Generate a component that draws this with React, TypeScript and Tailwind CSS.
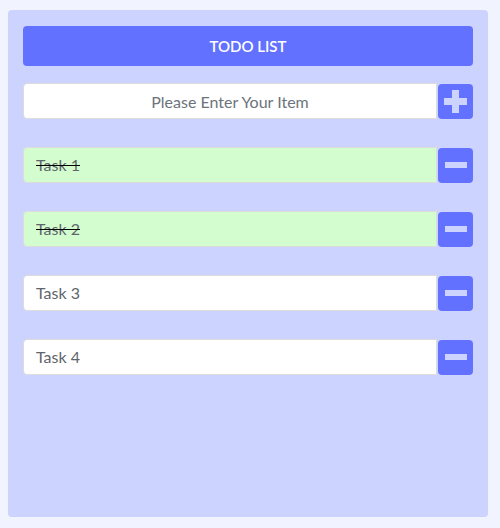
import { useState } from 'react';

type Task = { id: number; text: string; done: boolean };

const initial: Task[] = [
  { id: 1, text: 'Task 1', done: true },
  { id: 2, text: 'Task 2', done: true },
  { id: 3, text: 'Task 3', done: false },
  { id: 4, text: 'Task 4', done: false },
];

const App = () => {
  const [tasks, setTasks] = useState<Task[]>(initial);
  const [item, setItem] = useState('');

  const addTask = () => {
    if (!item.trim()) return;
    setTasks([...tasks, { id: Date.now(), text: item, done: false }]);
    setItem('');
  };

  const toggle = (id: number) => {
    setTasks(tasks.map((t) => (t.id === id ? { ...t, done: !t.done } : t)));
  };

  const remove = (id: number) => {
    setTasks(tasks.filter((t) => t.id !== id));
  };

  return (
    <div className="min-h-[528px] w-[500px] bg-[#f1f3fe] pt-[10px] pl-2 font-['Lato','Liberation_Sans',sans-serif]">
      <div className="h-[507px] w-[480px] rounded bg-[#ccd3ff] px-[15px] pt-4">
        <div className="flex h-10 items-center justify-center rounded bg-[#6271ff] text-[15px] font-semibold text-white">
          TODO LIST
        </div>

        <div className="mt-[17px] flex flex-col gap-7">
          <div className="flex h-9 items-center">
            <input
              className="h-9 flex-1 rounded-l border border-[#dcdcdc] bg-white px-3 text-center text-base text-gray-700 placeholder:text-[#6c737c] focus:outline-none"
              placeholder="Please Enter Your Item"
              value={item}
              onChange={(e) => setItem(e.target.value)}
            />
            <button
              type="button"
              onClick={addTask}
              className="ml-px flex h-[35px] w-[35px] items-center justify-center rounded bg-[#6271ff]"
            >
              <svg width="23" height="23" viewBox="0 0 23 23">
                <rect x="8" y="0" width="7" height="23" fill="#ccd3ff" />
                <rect x="0" y="8" width="23" height="7" fill="#ccd3ff" />
              </svg>
            </button>
          </div>

          {tasks.map((t) => (
            <div key={t.id} className="flex h-9 items-center">
              <div
                onClick={() => toggle(t.id)}
                className={`flex h-9 flex-1 cursor-pointer items-center rounded-l border border-[#dcdcdc] px-3 text-base text-[#5f656b] ${
                  t.done ? 'bg-[#d4fdcf] line-through decoration-black' : 'bg-white'
                }`}
              >
                {t.text}
              </div>
              <button
                type="button"
                onClick={() => remove(t.id)}
                className="ml-px flex h-[35px] w-[35px] items-center justify-center rounded bg-[#6271ff]"
              >
                <span className="block h-[6px] w-[22px] bg-[#ccd3ff]" />
              </button>
            </div>
          ))}
        </div>
      </div>
    </div>
  );
};

export default App;
